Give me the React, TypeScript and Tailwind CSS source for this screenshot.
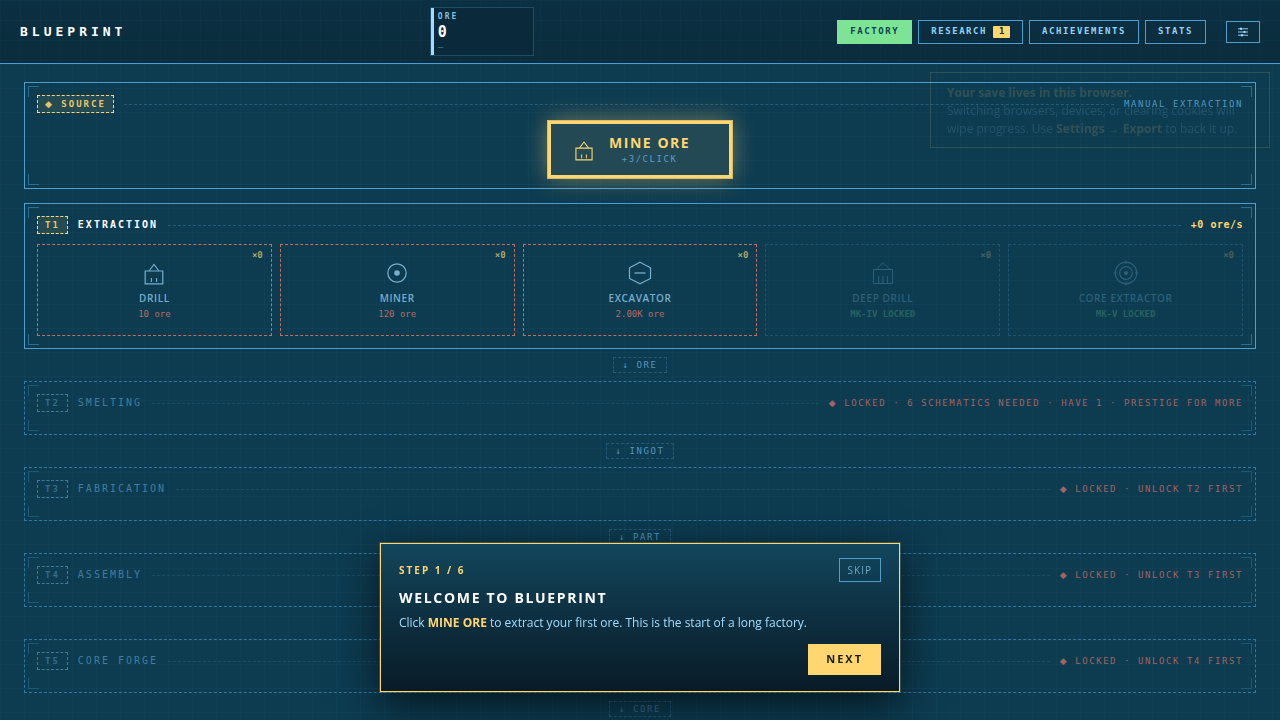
import clsx from "clsx";
import React from "react";

type IconName = "drill" | "miner" | "excavator" | "deepDrill" | "core";

interface Machine {
  id: number;
  name: string;
  icon: IconName;
  cost: string;
  locked?: boolean;
}

interface Tier {
  id: string;
  name: string;
  status: string;
  output: string;
}

const machines: Machine[] = [
  { id: 1, name: "DRILL", icon: "drill", cost: "10 ore" },
  { id: 2, name: "MINER", icon: "miner", cost: "120 ore" },
  { id: 3, name: "EXCAVATOR", icon: "excavator", cost: "2.00K ore" },
  { id: 4, name: "DEEP DRILL", icon: "deepDrill", cost: "MK-IV LOCKED", locked: true },
  { id: 5, name: "CORE EXTRACTOR", icon: "core", cost: "MK-V LOCKED", locked: true },
];

const tiers: Tier[] = [
  {
    id: "T2",
    name: "SMELTING",
    status: "LOCKED · 6 SCHEMATICS NEEDED · HAVE 1 · PRESTIGE FOR MORE",
    output: "INGOT",
  },
  { id: "T3", name: "FABRICATION", status: "LOCKED · UNLOCK T2 FIRST", output: "PART" },
  { id: "T4", name: "ASSEMBLY", status: "LOCKED · UNLOCK T3 FIRST", output: "MODULE" },
  { id: "T5", name: "CORE FORGE", status: "LOCKED · UNLOCK T4 FIRST", output: "CORE" },
];

const MachineIcon: React.FC<{ name: IconName; className?: string }> = ({
  name,
  className,
}) => (
  <svg
    viewBox="0 0 24 24"
    fill="none"
    stroke="currentColor"
    className={clsx("shrink-0 overflow-visible", className)}
  >
    {name === "drill" && (
      <>
        <path d="M3.2 10h17.6v12.8H3.2z" strokeWidth="1.2" />
        <path d="M7 10 12 3.3l5 6.7M9.4 17v4M14.6 17v4" strokeWidth="1.1" />
      </>
    )}
    {name === "miner" && (
      <>
        <circle cx="12" cy="12" r="9.2" strokeWidth="1.2" />
        <circle cx="12" cy="12" r="2.8" fill="currentColor" stroke="none" />
      </>
    )}
    {name === "excavator" && (
      <>
        <path d="M12 1.3 22.5 6.8v10.7L12 22.8 1.5 17.5V6.8z" strokeWidth="1.2" />
        <path d="M6.4 12h11.2" strokeWidth="1.6" opacity="0.8" />
      </>
    )}
    {name === "deepDrill" && (
      <path d="M2.4 8.5h19.2v14H2.4zM5 8.5l7-6.7 7 6.7M7.7 15v7.5M12 15v7.5M16.3 15v7.5" />
    )}
    {name === "core" && (
      <>
        <circle cx="12" cy="12" r="10.8" strokeWidth="1.2" />
        <circle cx="12" cy="12" r="6.4" strokeWidth="1.2" />
        <circle cx="12" cy="12" r="2" fill="currentColor" stroke="none" />
        <path d="M12-.5V3M12 21v3.5M-.5 12H3M21 12h3.5" />
      </>
    )}
  </svg>
);

const Diamond: React.FC = () => <span className="font-['DejaVu_Sans',sans-serif]">◆</span>;

const Corners: React.FC<{ dim?: boolean }> = ({ dim }) => {
  const base = clsx(
    "absolute size-[11px] pointer-events-none",
    dim ? "border-[#1d5875]" : "border-[#2b6e91]"
  );
  return (
    <>
      <span className={clsx(base, "top-[3px] left-[3px] border-t border-l")} />
      <span className={clsx(base, "top-[3px] right-[3px] border-t border-r")} />
      <span className={clsx(base, "bottom-[3px] left-[3px] border-b border-l")} />
      <span className={clsx(base, "bottom-[3px] right-[3px] border-b border-r")} />
    </>
  );
};

const Panel: React.FC<{ locked?: boolean; children: React.ReactNode }> = ({
  locked,
  children,
}) => (
  <section
    className={clsx(
      "relative shrink-0 border p-3",
      locked ? "border-dashed border-[#2f78a3]" : "border-[#4a9fd0]"
    )}
  >
    <Corners dim={locked} />
    {children}
  </section>
);

interface PanelHeaderProps {
  tag: React.ReactNode;
  title?: string;
  locked?: boolean;
  children: React.ReactNode;
}

const PanelHeader: React.FC<PanelHeaderProps> = ({ tag, title, locked, children }) => (
  <div className={clsx("flex items-center gap-2.5", !locked && "mb-2.5")}>
    <span
      className={clsx(
        "border border-dashed px-[7px] text-[9px] leading-4 font-bold tracking-[2px]",
        locked
          ? "border-[#427a96] text-[#346b88]"
          : "border-[#ffd670] bg-[#ffd670]/10 text-[#e8c568]"
      )}
    >
      {tag}
    </span>
    {title && (
      <h2
        className={clsx(
          "text-[10px] leading-4 tracking-[2px]",
          locked ? "text-[#437d9b]" : "font-bold text-white"
        )}
      >
        {title}
      </h2>
    )}
    <span
      className={clsx(
        "flex-1 border-t border-dashed",
        locked ? "border-[#1b4d65]" : "border-[#265c77]"
      )}
    />
    {children}
  </div>
);

const FlowChip: React.FC<{ label: string; dim?: boolean }> = ({ label, dim }) => (
  <div className="my-2 flex shrink-0 justify-center">
    <span
      className={clsx(
        "border border-dashed border-[#235a78] px-[9px] text-[9px] leading-[14px] tracking-[0.175em]",
        dim ? "text-[#3b7396]" : "text-[#5496bf]"
      )}
    >
      ↓ {label}
    </span>
  </div>
);

const navButton =
  "flex h-6 items-center gap-1.5 border px-3 text-[9px] font-bold tracking-[0.175em]";

const Header: React.FC = () => (
  <header className="flex h-16 shrink-0 items-center border-b border-[#4a9fd0] bg-[linear-gradient(#1c597a18_1px,transparent_1px),linear-gradient(90deg,#1c597a18_1px,transparent_1px),linear-gradient(#0b3042,#0b2c3d)] bg-[size:20px_20px,20px_20px,auto] px-5">
    <h1 className="text-[13px] font-bold tracking-[4px] text-white">BLUEPRINT</h1>
    <div className="flex flex-1 justify-center">
      <div className="flex w-[104px] border border-[#1f4d66] bg-[#0a293a]">
        <span className="w-[3px] bg-[#a3dcff]" />
        <div className="px-1 pt-[3px] pb-0.5">
          <div className="text-[8px] leading-3 font-bold tracking-[2px] text-[#7cc0e0]">ORE</div>
          <div className="text-[15px] leading-[18px] font-bold text-white">0</div>
          <div className="text-[9px] leading-3 text-[#4d8099]">—</div>
        </div>
      </div>
    </div>
    <nav className="flex gap-1.5">
      <button className={clsx(navButton, "border-[#7de495] bg-[#7de495] text-[#0d4450]")}>
        FACTORY
      </button>
      <button className={clsx(navButton, "border-[#4a9fd0] text-[#93d3f5]")}>
        RESEARCH
        <span className="flex h-3 w-[17px] items-center justify-center rounded-[1px] bg-[#ffd670] tracking-normal text-[#0b2c3d]">
          1
        </span>
      </button>
      <button className={clsx(navButton, "border-[#4a9fd0] text-[#93d3f5]")}>
        ACHIEVEMENTS
      </button>
      <button className={clsx(navButton, "border-[#4a9fd0] text-[#93d3f5]")}>STATS</button>
    </nav>
    <button
      aria-label="Settings"
      className="ml-5 flex h-[22px] w-[34px] items-center justify-center border border-[#4a9fd0] text-[#a3dcff]"
    >
      <svg viewBox="0 0 10 10" className="size-2.5" fill="currentColor">
        <path d="M0 1h10v1.6H0zM0 4.2h10v1.6H0zM0 7.4h10V9H0z" opacity="0.6" />
        <path d="M2 .8h2v2H2zM5.5 4h2v2h-2zM3 7.2h2v2H3z" />
      </svg>
    </button>
  </header>
);

const MachineCard: React.FC<{ machine: Machine }> = ({ machine }) => {
  const { name, icon, cost, locked } = machine;
  return (
    <button
      disabled={locked}
      className={clsx(
        "relative flex flex-col items-center border border-dashed pt-4 pb-[13px]",
        locked ? "border-[#1f536f]" : "border-[#c06f61]"
      )}
    >
      <span
        className={clsx(
          "absolute top-1 right-2 text-[9px] leading-3 font-bold",
          locked ? "text-[#47615a]" : "text-[#aea465]"
        )}
      >
        ×0
      </span>
      <MachineIcon
        name={icon}
        className={clsx("size-6", locked ? "text-[#2b6179]" : "text-[#77b0cf]")}
      />
      <span
        className={clsx(
          "mt-[5px] font-['Open_Sans',sans-serif] text-[10px] leading-4 font-semibold tracking-[0.06em]",
          locked ? "text-[#2c6078]" : "text-[#75adcb]"
        )}
      >
        {name}
      </span>
      <span
        className={clsx(
          "text-[9px] leading-4",
          locked ? "font-bold text-[#28625e]" : "text-[#b86b60]"
        )}
      >
        {cost}
      </span>
    </button>
  );
};

const SaveNotice: React.FC = () => (
  <aside className="pointer-events-none fixed top-[72px] right-2.5 w-[340px] border border-[#ffd670] px-4 pt-[11px] pb-[9px] font-['Open_Sans',sans-serif] text-xs leading-[18px] text-[#a3dcff] opacity-15">
    <strong className="text-[#ffd670]">Your save lives in this browser.</strong>
    <br />
    Switching browsers, devices, or clearing cookies will wipe progress. Use{" "}
    <strong className="text-[#ffd670]">Settings → Export</strong> to back it up.
  </aside>
);

const Tutorial: React.FC = () => (
  <div className="pointer-events-none fixed inset-x-0 bottom-7 flex justify-center">
    <div
      role="dialog"
      aria-labelledby="tutorial-title"
      className="pointer-events-auto w-[520px] border border-[#ffd670] bg-linear-to-b from-[#12465c] to-[#081b27] px-[18px] pt-3.5 pb-4 font-['Open_Sans',sans-serif] shadow-[0_0_0_1px_#ffd67033,0_12px_40px_#000000a6]"
    >
      <div className="flex items-center justify-between">
        <span className="text-[10px] font-bold tracking-[2px] text-[#ffd670]">STEP 1 / 6</span>
        <button className="h-6 border border-[#4a9fd0] px-2 text-[10px] tracking-[1px] text-[#6ca6c6]">
          SKIP
        </button>
      </div>
      <h2
        id="tutorial-title"
        className="mt-1.5 text-sm leading-5 font-bold tracking-[0.12em] text-white"
      >
        WELCOME TO BLUEPRINT
      </h2>
      <p className="mt-[5px] text-xs leading-5 text-[#a3dcff]">
        Click <strong className="text-[#ffd670]">MINE ORE</strong> to extract your first ore. This
        is the start of a long factory.
      </p>
      <div className="mt-[11px] flex justify-end">
        <button className="h-[31px] bg-[#ffd670] px-[18px] text-[11px] font-bold tracking-[2px] text-[#1c1a10]">
          NEXT
        </button>
      </div>
    </div>
  </div>
);

const App: React.FC = () => {
  return (
    <div className="flex h-screen flex-col bg-[#0d3b50] font-['DejaVu_Sans_Mono',monospace]">
      <Header />
      <main className="flex flex-1 flex-col overflow-y-auto bg-[linear-gradient(#2a7f9a14_1px,transparent_1px),linear-gradient(90deg,#2a7f9a14_1px,transparent_1px)] bg-[size:24px_24px] px-6 pt-[18px] [scrollbar-width:none]">
        <Panel>
          <PanelHeader
            tag={
              <>
                <Diamond /> SOURCE
              </>
            }
          >
            <span className="text-[9px] leading-4 tracking-[0.175em] text-[#5496bf]">
              MANUAL EXTRACTION
            </span>
          </PanelHeader>
          <div className="-my-0.5 flex justify-center">
            <button className="flex h-[57px] w-[184px] items-center gap-3.5 border-3 border-[#ffd670] bg-[#234955] pl-[22px] shadow-[0_0_0_1px_#ffd670cc,0_0_24px_#ffd67073]">
              <MachineIcon name="drill" className="size-[22px] text-[#ffd670]" />
              <span className="flex flex-col items-center">
                <span className="font-['Open_Sans',sans-serif] text-sm leading-[18px] font-bold tracking-[0.11em] text-[#ffd670]">
                  MINE ORE
                </span>
                <span className="text-[9px] leading-[14px] tracking-[0.175em] text-[#5c9cc4]">
                  +3/CLICK
                </span>
              </span>
            </button>
          </div>
        </Panel>

        <div className="mt-3.5 shrink-0">
          <Panel>
            <PanelHeader tag="T1" title="EXTRACTION">
              <span className="text-[10px] leading-4 font-bold tracking-[0.05em] text-[#ffd670]">
                +0 ore/s
              </span>
            </PanelHeader>
            <div className="grid grid-cols-5 gap-2">
              {machines.map((machine) => (
                <MachineCard key={machine.id} machine={machine} />
              ))}
            </div>
          </Panel>
        </div>
        <FlowChip label="ORE" />

        {tiers.map((tier) => (
          <React.Fragment key={tier.id}>
            <Panel locked>
              <div className="pb-2.5">
                <PanelHeader tag={tier.id} title={tier.name} locked>
                  <span className="text-[9px] leading-4 tracking-[0.175em] text-[#a2645f]">
                    <Diamond /> {tier.status}
                  </span>
                </PanelHeader>
              </div>
            </Panel>
            <FlowChip label={tier.output} dim={tier.output === "CORE"} />
          </React.Fragment>
        ))}
      </main>
      <SaveNotice />
      <Tutorial />
    </div>
  );
};

export default App;
